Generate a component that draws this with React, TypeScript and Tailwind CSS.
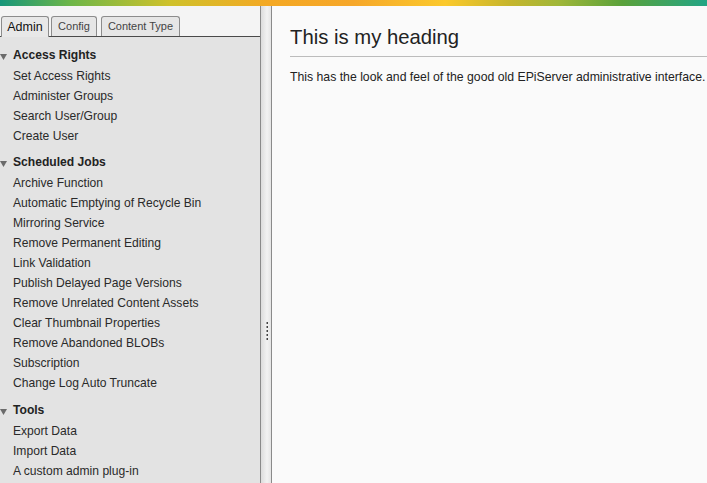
import React from "react";

const sections = [
  {
    title: "Access Rights",
    items: ["Set Access Rights", "Administer Groups", "Search User/Group", "Create User"],
  },
  {
    title: "Scheduled Jobs",
    items: [
      "Archive Function",
      "Automatic Emptying of Recycle Bin",
      "Mirroring Service",
      "Remove Permanent Editing",
      "Link Validation",
      "Publish Delayed Page Versions",
      "Remove Unrelated Content Assets",
      "Clear Thumbnail Properties",
      "Remove Abandoned BLOBs",
      "Subscription",
      "Change Log Auto Truncate",
    ],
  },
  {
    title: "Tools",
    items: ["Export Data", "Import Data", "A custom admin plug-in"],
  },
];

export default function App() {
  return (
    <div className="w-[707px] h-[483px] overflow-hidden flex flex-col bg-[#fafafa] font-['Liberation_Sans',Arial,sans-serif] text-[12px] text-[#222]">
      {/* brand strip */}
      <div className="h-[6px] shrink-0 bg-[linear-gradient(90deg,#17967a_0%,#6db648_10%,#cfc12b_24%,#f4a823_38%,#f6a72a_50%,#fbc92c_63%,#c6b52c_72%,#a0b739_79%,#5aa13a_88%,#22a585_100%)]" />

      <div className="flex flex-1 min-h-0">
        {/* left nav */}
        <div className="w-[261px] shrink-0 flex flex-col bg-[#e3e3e3] border-r border-[#8a8a8a]">
          <div className="h-[31px] shrink-0 bg-[#f4f4f4] border-b border-[#4a4a4a] flex items-end pl-[1px] gap-[2px]">
            <div className="h-[21px] -mb-px px-[5px] w-[48px] flex items-center justify-center bg-[#e8e8e8] border border-b-0 border-[#8c8c8c] rounded-t-[3px] text-[#111] text-[12.5px]">
              Admin
            </div>
            <div className="h-[20px] w-[46px] flex items-center justify-center bg-[#e6e6e6] border border-b-0 border-[#8c8c8c] rounded-t-[3px] text-[#444] text-[11px]">
              Config
            </div>
            <div className="h-[20px] ml-[2px] w-[79px] flex items-center justify-center bg-[#e6e6e6] border border-b-0 border-[#8c8c8c] rounded-t-[3px] text-[#444] text-[11px]">
              Content Type
            </div>
          </div>

          <div className="pt-[2px] text-[12.1px]">
            {sections.map((s, i) => (
              <div key={s.title} className={i === 2 ? "pt-[6px]" : "pt-[5px]"}>
                <div className="h-[22px] flex items-center">
                  <span className="w-[13px] shrink-0 pt-[3px]">
                    <svg width="7" height="6" viewBox="0 0 7 6" className="block">
                      <path d="M0 0 L7 0 L3.5 6 Z" fill="#6b6b6b" />
                    </svg>
                  </span>
                  <span className="font-bold text-[#222]">{s.title}</span>
                </div>
                {s.items.map((it) => (
                  <div key={it} className="h-[20px] flex items-center pl-[13px] text-[#2a2a2a]">
                    {it}
                  </div>
                ))}
              </div>
            ))}
          </div>
        </div>

        {/* splitter */}
        <div className="w-[11px] shrink-0 border-r border-[#8a8a8a] bg-[linear-gradient(90deg,#dcdcdc,#f2f2f2_60%,#e4e4e4)] flex flex-col items-center pt-[316px] pl-[2px]">
          <div className="flex flex-col gap-[2px]">
            {[0, 1, 2, 3, 4].map((i) => (
              <div key={i} className="w-[2px] h-[2px] bg-[#444] border-l border-[#999]" />
            ))}
          </div>
        </div>

        {/* content */}
        <div className="flex-1 min-w-0 pl-[18px] pt-[18px]">
          <h1 className="text-[20.3px] leading-[26px] text-[#222] pb-[6px] border-b border-[#bcbcbc]">
            This is my heading
          </h1>
          <p className="mt-[11px] text-[12.25px] text-[#222] whitespace-nowrap">
            This has the look and feel of the good old EPiServer administrative interface.
          </p>
        </div>
      </div>
    </div>
  );
}
